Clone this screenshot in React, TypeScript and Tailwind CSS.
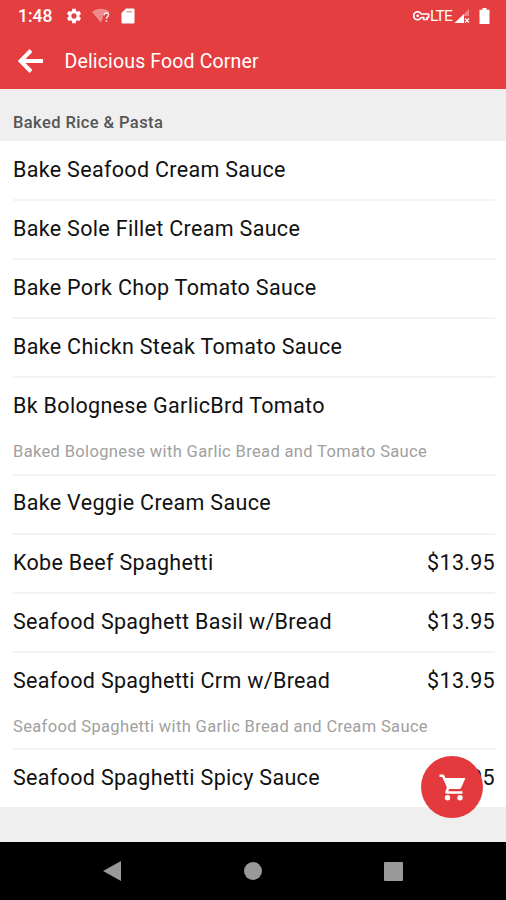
import React from "react";
import { MdSettings } from "react-icons/md";

type MenuItem = {
  name: string;
  description?: string;
  price?: string;
};

const menuItems: MenuItem[] = [
  { name: "Bake Seafood Cream Sauce" },
  { name: "Bake Sole Fillet Cream Sauce" },
  { name: "Bake Pork Chop Tomato Sauce" },
  { name: "Bake Chickn Steak Tomato Sauce" },
  {
    name: "Bk Bolognese GarlicBrd Tomato",
    description: "Baked Bolognese with Garlic Bread and Tomato Sauce",
  },
  { name: "Bake Veggie Cream Sauce" },
  { name: "Kobe Beef Spaghetti", price: "$13.95" },
  { name: "Seafood Spaghett Basil w/Bread", price: "$13.95" },
  {
    name: "Seafood Spaghetti Crm w/Bread",
    description: "Seafood Spaghetti with Garlic Bread and Cream Sauce",
    price: "$13.95",
  },
  { name: "Seafood Spaghetti Spicy Sauce", price: "$13.95" },
];

const StatusBar = () => (
  <div className="flex h-8 items-center justify-between pl-[18px] pr-[16px]">
    <div className="flex items-center">
      <span className="w-[34px] whitespace-nowrap text-[17.5px] font-medium leading-8">
        1:48
      </span>
      <MdSettings className="ml-[13px] size-[18px]" />
      {/* Wifi without internet */}
      <svg className="ml-[9px] h-4 w-5" viewBox="0 0 20 16">
        <path
          d="M0 4C5-0.300 13-0.300 17.500 4L15.500 6.300C12.500 5 10 7 11 10L8.800 14.500Z"
          fill="#fff"
          fillOpacity="0.4"
        />
        <path
          d="M12.200 7.300C12.200 4 17 4.200 16.500 7.200C16.200 8.700 14.500 8.800 14.400 10.700M14.400 12.200V14"
          fill="none"
          stroke="#fff"
          strokeOpacity="0.85"
          strokeWidth="1.5"
        />
      </svg>
      {/* SD card */}
      <svg className="ml-[9px] h-4 w-[14px]" viewBox="0 0 14 16">
        <path
          d="M5 0.500H12.500Q13.500 0.500 13.500 1.500V14.500Q13.500 15.500 12.500 15.500H1.500Q0.500 15.500 0.500 14.500V5Z"
          fill="#fff"
        />
        <path d="M5.500 3H11V4.500H5.500Z" fill="#e53e40" fillOpacity="0.5" />
      </svg>
    </div>
    <div className="flex items-center">
      {/* VPN key */}
      <svg className="h-4 w-[17px]" viewBox="0 0 17 16">
        <path
          d="M8.200 6A4 4 0 1 0 8.200 9.500H10.700V11.500H14.100V9.500H15.600V6Z"
          fill="none"
          stroke="#fff"
          strokeWidth="1.700"
          strokeLinejoin="round"
        />
        <circle cx="4.700" cy="7.800" r="1.400" fill="#fff" />
      </svg>
      <span className="w-[22px] whitespace-nowrap text-[15.5px] leading-8 tracking-[-0.7px]">
        LTE
      </span>
      <svg className="ml-[2px] size-4" viewBox="0 0 16 16">
        <path d="M15 1V8H10V15H1Z" fill="#fff" fillOpacity="0.35" />
        <path d="M10 6V15H0.500Z" fill="#fff" />
        <path
          d="M11 10.500L15 14.500M15 10.500L11 14.500"
          stroke="#fff"
          strokeWidth="1.300"
        />
      </svg>
      <svg className="ml-[9px] h-4 w-[11px]" viewBox="0 0 11 16">
        <path
          d="M3.500 0H7.500V1.800H10.500V16H0.500V1.800H3.500Z"
          fill="#fff"
        />
      </svg>
    </div>
  </div>
);

const MenuRow = ({ item }: { item: MenuItem }) => (
  <li className="border-b-2 border-[#f3f3f3] last:border-b-0">
    <div className="flex h-[57.1px] items-center justify-between pb-[1.4px] text-[21.5px] text-[#111]">
      <span className="whitespace-nowrap tracking-[0.32px]">{item.name}</span>
      {item.price && <span className="tracking-[0.3px]">{item.price}</span>}
    </div>
    {item.description && (
      <p className="h-[38.3px] whitespace-nowrap pt-[6px] text-[16.5px] leading-[22px] tracking-[0.35px] text-[#a0a0a0]">
        {item.description}
      </p>
    )}
  </li>
);

const App = () => {
  return (
    <div className="relative flex h-[900px] w-[506px] flex-col overflow-hidden bg-[#efefef] font-['Roboto',sans-serif]">
      <header className="h-[89px] shrink-0 bg-[#e53e40] text-white">
        <StatusBar />
        <div className="flex h-[57px] items-center pl-[18px]">
          <svg className="h-6 w-[25px]" viewBox="0 0 25 24">
            <path
              d="M13 1.500L2.500 12L13 22.500M2.500 12H25"
              fill="none"
              stroke="#fff"
              strokeWidth="4"
            />
          </svg>
          <h1 className="ml-[21.5px] pt-[2px] text-[19.5px] tracking-[0.15px]">
            Delicious Food Corner
          </h1>
        </div>
      </header>

      <h2 className="h-[52px] shrink-0 pl-[13px] pt-[23px] text-[16.5px] font-medium leading-[22px] tracking-[0.4px] text-[#555]">
        Baked Rice &amp; Pasta
      </h2>

      <ul className="h-[666px] shrink-0 bg-white pl-[13px] pr-[11px] pt-px">
        {menuItems.map((item) => (
          <MenuRow key={item.name} item={item} />
        ))}
      </ul>

      {/* Cart button */}
      <button className="absolute left-[421px] top-[756px] flex size-[62px] items-center justify-center rounded-full bg-[#e53a3d] text-white">
        <svg className="h-[27px] w-7" viewBox="0 0 28 27">
          <path
            d="M1.500 1.800H5L10.300 13L8.500 18.500H24.500"
            fill="none"
            stroke="#fff"
            strokeWidth="2.600"
            strokeLinejoin="round"
          />
          <path
            d="M5.500 4H27.500L23 14Q22.500 15 21.500 15H10Z"
            fill="#fff"
          />
          <circle cx="9.500" cy="23.800" r="2.700" fill="#fff" />
          <circle cx="22" cy="23.800" r="2.700" fill="#fff" />
        </svg>
      </button>

      {/* Android navigation */}
      <nav className="mt-auto flex h-[58px] items-center justify-between bg-black pl-[102px] pr-[103px]">
        <svg className="h-[22px] w-5" viewBox="0 0 20 22">
          <path d="M1 11L19 1V21Z" fill="#999" />
        </svg>
        <span className="size-[18px] rounded-full bg-[#999]" />
        <span className="size-[19px] rounded-[1px] bg-[#999]" />
      </nav>
    </div>
  );
};

export default App;
